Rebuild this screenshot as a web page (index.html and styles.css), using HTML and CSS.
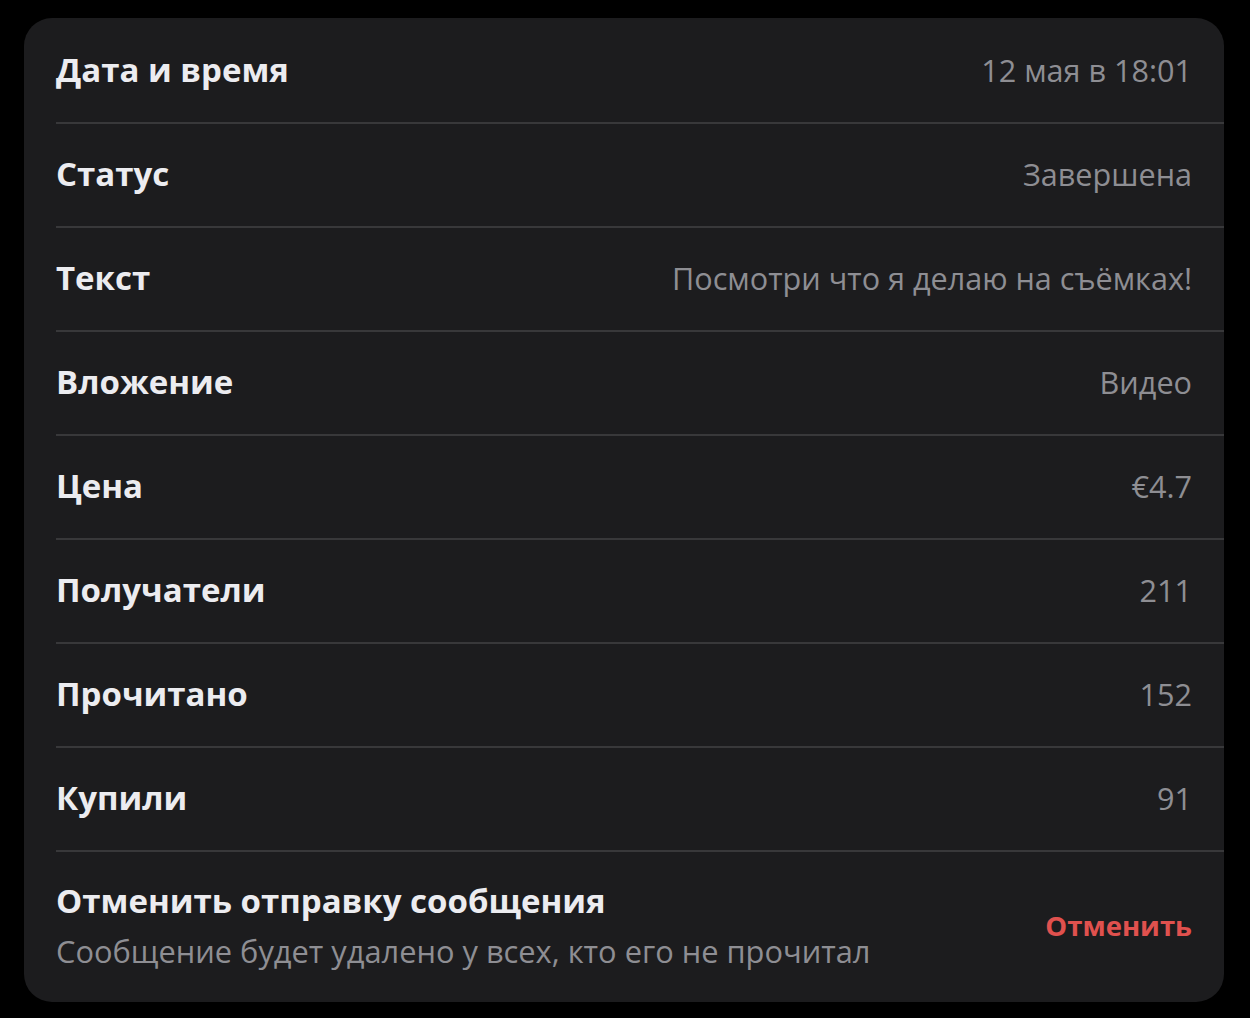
FILE: index.html
```html
<!DOCTYPE html>
<html lang="ru">
<head>
<meta charset="utf-8">
<link rel="stylesheet" href="styles.css">
</head>
<body>
<div class="card">
  <div class="row"><span class="label">Дата и время</span><span class="value">12 мая в 18:01</span></div>
  <div class="row"><span class="label">Статус</span><span class="value">Завершена</span></div>
  <div class="row"><span class="label">Текст</span><span class="value">Посмотри что я делаю на съёмках!</span></div>
  <div class="row"><span class="label">Вложение</span><span class="value">Видео</span></div>
  <div class="row"><span class="label">Цена</span><span class="value">€4.7</span></div>
  <div class="row"><span class="label">Получатели</span><span class="value">211</span></div>
  <div class="row"><span class="label">Прочитано</span><span class="value">152</span></div>
  <div class="row"><span class="label">Купили</span><span class="value">91</span></div>
  <div class="cancel">
    <div class="cancel-text">
      <div class="label">Отменить отправку сообщения</div>
      <div class="sub">Сообщение будет удалено у всех, кто его не прочитал</div>
    </div>
    <span class="cancel-btn">Отменить</span>
  </div>
</div>
</body>
</html>
```
FILE: styles.css
```css
html, body {
  margin: 0;
  padding: 0;
  background: #000;
}
body {
  padding: 18px 26px 16px 24px;
  font-family: "Open Sans", "Noto Sans", sans-serif;
}
.card {
  background: #1c1c1e;
  border-radius: 28px;
  padding-left: 32px;
  padding-top: 2px;
  overflow: hidden;
}
.row {
  box-sizing: border-box;
  height: 104px;
  padding-bottom: 3px;
  border-bottom: 2px solid #38383a;
  display: flex;
  align-items: center;
  justify-content: space-between;
  padding-right: 32px;
}
.label {
  color: #ececf0;
  font-size: 33px;
  font-weight: 700;
  line-height: 44px;
}
.value {
  color: #8e8e93;
  font-size: 30.6px;
  font-weight: 400;
}
.cancel {
  display: flex;
  align-items: center;
  justify-content: space-between;
  padding: 27px 32px 31px 0;
}
.sub {
  color: #8e8e93;
  font-size: 30.8px;
  line-height: 40px;
  margin-top: 8px;
}
.cancel-btn {
  color: #e0514e;
  font-size: 27.5px;
  font-weight: 700;
}
```
